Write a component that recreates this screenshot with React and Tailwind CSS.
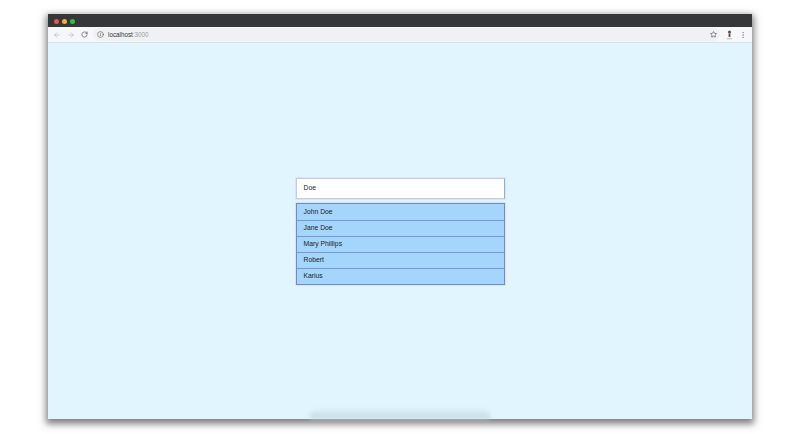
import { ArrowLeft, ArrowRight, RotateCw, Info, Star, MoreVertical } from 'lucide-react'

const people = ['John Doe', 'Jane Doe', 'Mary Phillips', 'Robert', 'Karius']

export default function App() {
  return (
    <div className="h-[434px] w-[800px] bg-white pt-[14px] pl-[48px] font-['Liberation_Sans',sans-serif] overflow-hidden">
      <div className="relative flex h-[405px] w-[704px] flex-col shadow-[0_3px_7px_2px_rgba(0,0,0,0.5)]">
        <div className="flex h-[13px] items-center gap-[3px] bg-[#363739] pl-[5.5px] pt-[1px]">
          <span className="size-[5px] rounded-full bg-[#f0524f]" />
          <span className="size-[5px] rounded-full bg-[#f2b32e]" />
          <span className="size-[5px] rounded-full bg-[#2cc13f]" />
        </div>

        <div className="flex h-[16px] items-center border-b border-[#d5e2e8] bg-[#f6f7f8] pl-[5px] pr-[5px]">
          <ArrowLeft size={8} strokeWidth={2} className="text-[#b5b7ba]" />
          <ArrowRight size={8} strokeWidth={2} className="ml-[6px] text-[#b5b7ba]" />
          <RotateCw size={7} strokeWidth={2.2} className="ml-[6px] text-[#56585b]" />
          <div className="ml-[5px] flex h-[13px] flex-1 items-center rounded-full bg-[#f0f1f3] pl-[4px] pr-[3px]">
            <Info size={7} strokeWidth={2} className="text-[#55575a]" />
            <span className="ml-[4px] pt-[1px] text-[6.3px] leading-none text-[#35373a]">
              localhost<span className="text-[#9a9c9f]">:3000</span>
            </span>
            <Star size={7} strokeWidth={2.2} className="ml-auto text-[#4a4c4f]" />
          </div>
          <svg width="7" height="10" viewBox="0 0 7 10" className="ml-[5.5px]">
            <circle cx="3.5" cy="2" r="1.5" fill="#6b4a34" />
            <rect x="2.6" y="3.5" width="1.8" height="3.5" fill="#5a4a42" />
            <rect x="1" y="8" width="5" height="1.4" fill="#c9c9cc" />
          </svg>
          <MoreVertical size={8} strokeWidth={2} className="ml-[6.5px] text-[#8a8c8f]" />
        </div>

        <main className="flex flex-1 flex-col items-center justify-center bg-[#e1f5fe]">
          <div className="flex h-[21px] w-[209px] items-center border border-[#c5cae9] border-r-[#9fa8da] bg-white px-[7px] pt-[1px] text-[6.8px] text-[#1f2124] shadow-[0_0_0_1px_rgba(197,202,233,0.35)]">
            Doe
          </div>
          <ul className="mt-[4px] w-[209px] border border-[#7986cb] bg-[#a4d6fb] shadow-[0_0_0_1px_rgba(197,202,233,0.4)]">
            {people.map((name, i) => (
              <li
                key={name}
                className={`flex h-[16px] items-center px-[7px] pt-[1px] text-[6.8px] text-[#1c2128] ${i > 0 ? 'border-t border-[#7b97d8]' : ''}`}
              >
                {name}
              </li>
            ))}
          </ul>
        </main>

        {/* smudge left over the bottom edge of the window */}
        <div className="absolute bottom-0 left-[262px] h-[11px] w-[180px] rounded-t-lg bg-linear-to-b from-transparent to-[#c3d7df] blur-[2px]" />
      </div>
    </div>
  )
}
